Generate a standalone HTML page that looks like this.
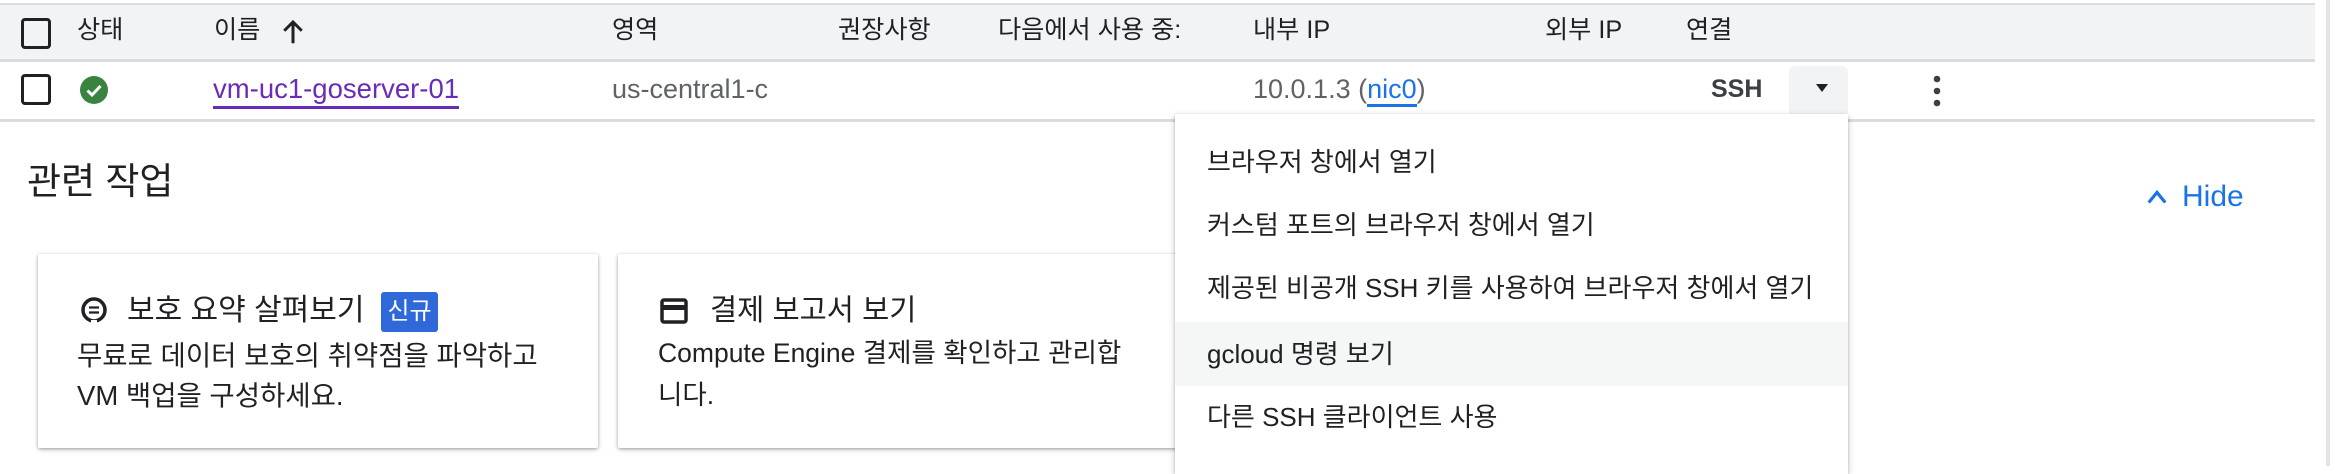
<!DOCTYPE html>
<html><head><meta charset="utf-8"><style>
*{margin:0;padding:0;box-sizing:border-box}
body{width:2342px;height:466px;background:#fff;position:relative;overflow:hidden;font-family:"Liberation Sans","Noto Sans CJK KR",sans-serif;color:#202124}
.a{position:absolute;white-space:nowrap}
.hdr{left:0;top:3px;width:2315px;height:59px;background:#f1f3f4;border-top:2px solid #dadce0;border-bottom:3px solid #dadce0}
.ht{font-size:25.2px;top:12px;line-height:36px;color:#202124}
.cb{width:30px;height:31px;border:3px solid #202124;border-radius:4px}
.rt{font-size:26px;top:72px;line-height:34px}
.menu{left:1175px;top:114px;width:673px;height:360px;background:#fff;box-shadow:0 2px 6px rgba(0,0,0,.25),0 1px 2px rgba(0,0,0,.15)}
.mi{position:absolute;left:0;width:673px;height:64px;font-size:26px;line-height:64px;padding-left:32px;color:#202124}
.card{background:#fff;box-shadow:0 1px 3px rgba(0,0,0,.3),0 2px 6px rgba(0,0,0,.12);border-radius:2px}
</style></head><body>
<div class="a hdr"></div>
<div class="a" style="left:2326px;top:0;width:4px;height:466px;background:#e3e3e3"></div>
<div class="a cb" style="left:21px;top:18px"></div>
<div class="a ht" style="left:77px">상태</div>
<div class="a ht" style="left:214px">이름</div>
<svg class="a" style="left:278px;top:17px" width="30" height="30" viewBox="0 0 24 24"><path d="M12 21V5M5 11l7-7 7 7" stroke="#202124" stroke-width="2.4" fill="none"/></svg>
<div class="a ht" style="left:612px">영역</div>
<div class="a ht" style="left:838px">권장사항</div>
<div class="a ht" style="left:998px">다음에서 사용 중:</div>
<div class="a ht" style="left:1253px">내부 IP</div>
<div class="a ht" style="left:1545px">외부 IP</div>
<div class="a ht" style="left:1686px">연결</div>

<div class="a" style="left:0;top:119px;width:2315px;height:3px;background:#dadce0"></div>
<div class="a cb" style="left:21px;top:74px"></div>
<svg class="a" style="left:80px;top:76px" width="28" height="28" viewBox="0 0 28 28"><circle cx="14" cy="14" r="14" fill="#3a833f"/><path d="M7.5 14.5l4.5 4.5 8.5-9" stroke="#fff" stroke-width="3" fill="none"/></svg>
<div class="a rt" style="left:213px;color:#6a2bb8;border-bottom:3px solid #6a2bb8;font-size:27.5px">vm-uc1-goserver-01</div>
<div class="a rt" style="left:612px;color:#5f6368;font-size:27px">us-central1-c</div>
<div class="a rt" style="left:1253px;color:#5f6368;font-size:27px">10.0.1.3 (<span style="color:#1a73e8;border-bottom:3px solid #1a73e8">nic0</span>)</div>
<div class="a rt" style="left:1711px;color:#3c4043;font-weight:bold;font-size:25px">SSH</div>
<div class="a" style="left:1789px;top:66px;width:59px;height:50px;background:#f1f3f4;border-radius:6px 6px 0 0"></div>
<div class="a" style="left:1816px;top:84px;width:0;height:0;border-left:6px solid transparent;border-right:6px solid transparent;border-top:8px solid #202124"></div>
<svg class="a" style="left:1930px;top:74px" width="14" height="34"><circle cx="7" cy="5" r="3.3" fill="#3c4043"/><circle cx="7" cy="17" r="3.3" fill="#3c4043"/><circle cx="7" cy="29" r="3.3" fill="#3c4043"/></svg>

<div class="a" style="left:27px;top:158px;font-size:37px;line-height:48px;color:#202124">관련 작업</div>
<svg class="a" style="left:2146px;top:186px" width="22" height="22" viewBox="0 0 24 24"><path d="M3 18L12 7l9 11" stroke="#1a73e8" stroke-width="3.5" fill="none"/></svg>
<div class="a" style="left:2182px;top:178px;font-size:30px;line-height:38px;color:#1a73e8">Hide</div>

<div class="a card" style="left:38px;top:254px;width:560px;height:194px"></div>
<svg class="a" style="left:80px;top:296px" width="28" height="30" viewBox="0 0 28 30"><circle cx="14" cy="14" r="11" stroke="#202124" stroke-width="3.5" fill="none"/><path d="M9 11.5h10M9 16.5h10" stroke="#202124" stroke-width="2.2"/><rect x="11" y="24" width="6" height="5" fill="#fff"/></svg>
<div class="a" style="left:127px;top:290px;font-size:30px;line-height:42px">보호 요약 살펴보기</div>
<div class="a" style="left:381px;top:292px;width:57px;height:40px;background:#2f68d8;border-radius:3px;color:#fff;font-size:24px;line-height:40px;text-align:center">신규</div>
<div class="a" style="left:77px;top:336px;font-size:27.5px;line-height:40px">무료로 데이터 보호의 취약점을 파악하고<br>VM 백업을 구성하세요.</div>

<div class="a card" style="left:618px;top:254px;width:560px;height:194px"></div>
<svg class="a" style="left:660px;top:298px" width="28" height="26" viewBox="0 0 28 26"><rect x="2" y="2" width="24" height="22" rx="2" stroke="#202124" stroke-width="3.5" fill="none"/><rect x="2" y="7" width="24" height="5" fill="#202124"/></svg>
<div class="a" style="left:710px;top:290px;font-size:29.5px;line-height:42px">결제 보고서 보기</div>
<div class="a" style="left:658px;top:332px;font-size:26.5px;line-height:42px">Compute Engine 결제를 확인하고 관리합<br>니다.</div>

<div class="a menu">
<div class="mi" style="top:16px">브라우저 창에서 열기</div>
<div class="mi" style="top:79px">커스텀 포트의 브라우저 창에서 열기</div>
<div class="mi" style="top:142px">제공된 비공개 SSH 키를 사용하여 브라우저 창에서 열기</div>
<div class="mi" style="top:208px;background:#f5f6f6">gcloud 명령 보기</div>
<div class="mi" style="top:271px">다른 SSH 클라이언트 사용</div>
</div>
</body></html>
